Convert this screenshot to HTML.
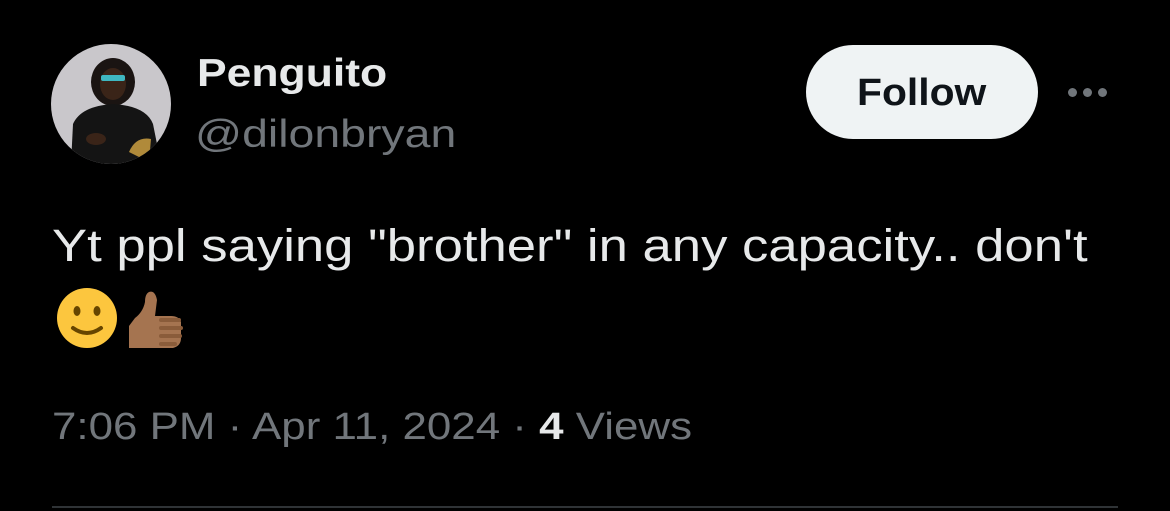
<!DOCTYPE html>
<html><head><style>
body{margin:0;width:1170px;height:511px;background:#000;overflow:hidden;font-family:"Liberation Sans",sans-serif;position:relative}
.a{position:absolute;transform-origin:left top;white-space:nowrap}
</style></head><body>
<div class="a" style="left:51px;top:44px;width:120px;height:120px;border-radius:50%;background:#c9c7cb;overflow:hidden">
<svg width="120" height="120" viewBox="0 0 120 120">
<ellipse cx="62" cy="38" rx="22" ry="24" fill="#1a1412"/>
<ellipse cx="62" cy="40" rx="13" ry="16" fill="#3a2418"/>
<rect x="50" y="31" width="24" height="6" rx="2" fill="#3fb7c0"/>
<path d="M20 120 L22 80 Q30 62 62 60 Q95 62 102 80 L110 120Z" fill="#141414"/>
<ellipse cx="45" cy="95" rx="10" ry="6" fill="#3a2418"/>
<path d="M78 108 Q85 92 100 95 L98 118 Z" fill="#b08a3a"/>
</svg></div>
<div class="a" style="left:197px;top:52px;color:#e7e9ea;font-weight:bold;font-size:39px;transform:scaleX(1.14)">Penguito</div>
<div class="a" style="left:195px;top:113px;color:#71767b;font-size:39px;transform:scaleX(1.19)">@dilonbryan</div>
<div class="a" style="left:806px;top:45px;width:232px;height:94px;border-radius:47px;background:#eff3f4;"></div>
<div class="a" style="left:857px;top:72px;color:#0f1419;font-weight:bold;font-size:38px;transform:scaleX(1.075)">Follow</div>
<div class="a" style="left:1068px;top:88px;display:flex;gap:6px">
<i style="width:9px;height:9px;border-radius:50%;background:#71767b"></i><i style="width:9px;height:9px;border-radius:50%;background:#71767b"></i><i style="width:9px;height:9px;border-radius:50%;background:#71767b"></i></div>
<div class="a" style="left:52px;top:220px;color:#e7e9ea;font-size:45px;transform:scaleX(1.17)">Yt ppl saying "brother" in any capacity.. don't</div>
<svg class="a" style="left:55px;top:286px" width="135" height="64" viewBox="0 0 135 64">
<circle cx="32" cy="32" r="30" fill="#fcc63e"/>
<ellipse cx="22" cy="25" rx="3.5" ry="5" fill="#664500"/><ellipse cx="42" cy="25" rx="3.5" ry="5" fill="#664500"/>
<path d="M18 42 Q32 52 46 42" stroke="#664500" stroke-width="4" fill="none" stroke-linecap="round"/>
<path d="M74 40 L74 62 L118 62 Q126 60 126 52 L126 36 Q124 30 116 30 L100 30 L102 14 Q100 4 94 6 Q90 8 90 16 Q88 26 80 32 Z" fill="#a57450"/>
<g stroke="#8a5c3a" stroke-width="4" fill="none" stroke-linecap="round"><path d="M106 34 H124"/><path d="M106 42 H126"/><path d="M106 50 H125"/><path d="M106 58 H120"/></g>
</svg>
<div class="a" style="left:52px;top:406px;color:#71767b;font-size:38px;transform:scaleX(1.155)">7:06 PM · Apr 11, 2024 · <b style="color:#e7e9ea">4</b> Views</div>
<div class="a" style="left:52px;top:506px;width:1066px;height:2px;background:#2f3336"></div>
</body></html>
